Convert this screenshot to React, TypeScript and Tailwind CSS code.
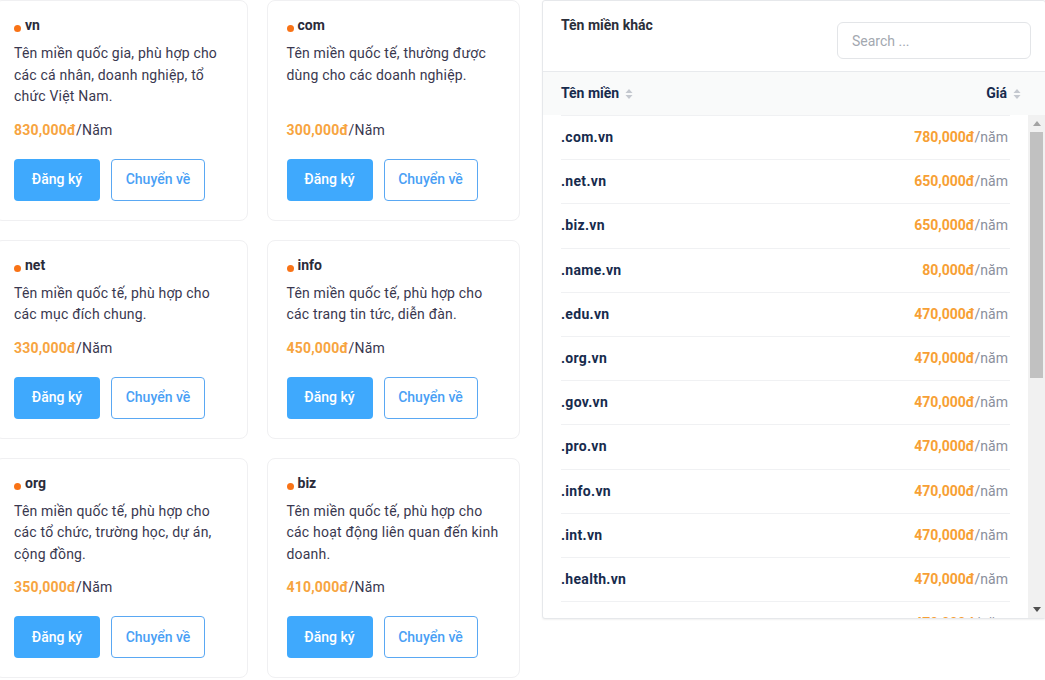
import React from "react";

type Plan = { tld: string; desc: string; price: string };

const PLANS: Plan[] = [
  { tld: "vn", desc: "Tên miền quốc gia, phù hợp cho các cá nhân, doanh nghiệp, tổ chức Việt Nam.", price: "830,000đ" },
  { tld: "com", desc: "Tên miền quốc tế, thường được dùng cho các doanh nghiệp.", price: "300,000đ" },
  { tld: "net", desc: "Tên miền quốc tế, phù hợp cho các mục đích chung.", price: "330,000đ" },
  { tld: "info", desc: "Tên miền quốc tế, phù hợp cho các trang tin tức, diễn đàn.", price: "450,000đ" },
  { tld: "org", desc: "Tên miền quốc tế, phù hợp cho các tổ chức, trường học, dự án, cộng đồng.", price: "350,000đ" },
  { tld: "biz", desc: "Tên miền quốc tế, phù hợp cho các hoạt động liên quan đến kinh doanh.", price: "410,000đ" },
];

const OTHERS: [string, string][] = [
  [".com.vn", "780,000đ"],
  [".net.vn", "650,000đ"],
  [".biz.vn", "650,000đ"],
  [".name.vn", "80,000đ"],
  [".edu.vn", "470,000đ"],
  [".org.vn", "470,000đ"],
  [".gov.vn", "470,000đ"],
  [".pro.vn", "470,000đ"],
  [".info.vn", "470,000đ"],
  [".int.vn", "470,000đ"],
  [".health.vn", "470,000đ"],
  [".ac.vn", "470,000đ"],
  [".id.vn", "470,000đ"],
  [".io.vn", "470,000đ"],
];

function SortIcon() {
  return (
    <svg width="8" height="12" viewBox="0 0 8 12" className="ml-[6px] shrink-0">
      <path d="M4 1 L7.5 5 H0.5 Z" fill="#c4c8cf" />
      <path d="M4 11 L7.5 7 H0.5 Z" fill="#c4c8cf" />
    </svg>
  );
}

function PlanCard({ plan }: { plan: Plan }) {
  return (
    <div className="flex flex-col rounded-lg border border-[#f0f0f2] bg-white px-[19px] pt-[14px] pb-[19px]">
      <div className="text-[14px] font-bold leading-5 text-[#2b2b3a]">
        <span className="mr-1 inline-block h-[7px] w-[7px] rounded-full bg-[#f97316] align-[-2px]" />
        {plan.tld}
      </div>
      <p className="mt-2 flex-1 text-[14px] leading-[21.5px] tracking-[0.2px] text-[#3a384f]">{plan.desc}</p>
      <div className="mt-3 text-[14px] leading-[21px] tracking-[0.2px] text-[#3a384f]">
        <span className="font-bold text-[#f7a440]">{plan.price}</span>/Năm
      </div>
      <div className="mt-[18px] flex gap-[11px]">
        <button className="h-[42px] w-[86px] rounded-[4px] bg-[#3fa9fd] text-[14px] font-medium text-white">
          Đăng ký
        </button>
        <button className="h-[42px] w-[94px] rounded-[4px] border border-[#5aa8f3] bg-white text-[14px] font-medium text-[#4a9ff5]">
          Chuyển về
        </button>
      </div>
    </div>
  );
}

// classic scrollbar look (the browser hides real scrollbars)
function FakeScrollbar() {
  return (
    <div className="flex w-[17px] shrink-0 flex-col bg-[#f1f1f1]">
      <div className="flex h-[17px] items-center justify-center">
        <svg width="8" height="5" viewBox="0 0 8 5">
          <path d="M4 0 L8 5 H0 Z" fill="#a3a3a3" />
        </svg>
      </div>
      <div className="flex-1">
        <div className="mx-[2px] h-[246px] bg-[#c1c1c1]" />
      </div>
      <div className="flex h-[17px] items-center justify-center">
        <svg width="8" height="5" viewBox="0 0 8 5">
          <path d="M4 5 L8 0 H0 Z" fill="#505050" />
        </svg>
      </div>
    </div>
  );
}

export default function App() {
  return (
    <div
      className="flex h-[680px] w-[1045px] items-start overflow-hidden bg-white"
      style={{ fontFamily: "Roboto, 'Liberation Sans', sans-serif" }}
    >
      {/* Featured domains */}
      <div className="ml-[-6px] grid w-[526px] shrink-0 grid-cols-2 gap-[19px]">
        {PLANS.map((p) => (
          <PlanCard key={p.tld} plan={p} />
        ))}
      </div>

      {/* Other domains table */}
      <div className="ml-[22px] mr-[-1px] flex-1 rounded-[3px] border border-[#e6e8eb] bg-white shadow-[0_1px_2px_rgba(0,0,0,0.06)]">
        <div className="flex h-[71px] items-start justify-between border-b border-[#e8eaed] pl-[18px] pr-[14px]">
          <div className="pt-[14px] text-[14px] font-bold leading-5 text-[#2b2f3a]">Tên miền khác</div>
          <input
            placeholder="Search ..."
            className="mt-[21px] h-[37px] w-[194px] rounded-md border border-[#e3e5e8] px-[14px] text-[14px] text-[#333] outline-none placeholder:text-[#a3a8b0]"
          />
        </div>
        <div className="flex h-[43px] items-center justify-between bg-[#f9fafa] pl-[18px] pr-[24px] text-[14px] font-bold text-[#172b4d]">
          <div className="flex items-center">
            Tên miền
            <SortIcon />
          </div>
          <div className="flex items-center">
            Giá
            <SortIcon />
          </div>
        </div>
        <div className="flex h-[503px]">
          <div className="flex-1 overflow-hidden pl-[18px] pr-[18px]">
            <div className="border-t border-[#f0f1f3]">
              {OTHERS.map(([name, price]) => (
                <div
                  key={name}
                  className="flex h-[44.2px] items-center justify-between border-b border-[#f0f1f3] pr-[2px] text-[14px]"
                >
                  <span className="font-bold tracking-[0.3px] text-[#172b4d]">{name}</span>
                  <span className="text-[#8a8f9c]">
                    <span className="font-bold text-[#f7a034]">{price}</span>/năm
                  </span>
                </div>
              ))}
            </div>
          </div>
          <FakeScrollbar />
        </div>
      </div>
    </div>
  );
}
